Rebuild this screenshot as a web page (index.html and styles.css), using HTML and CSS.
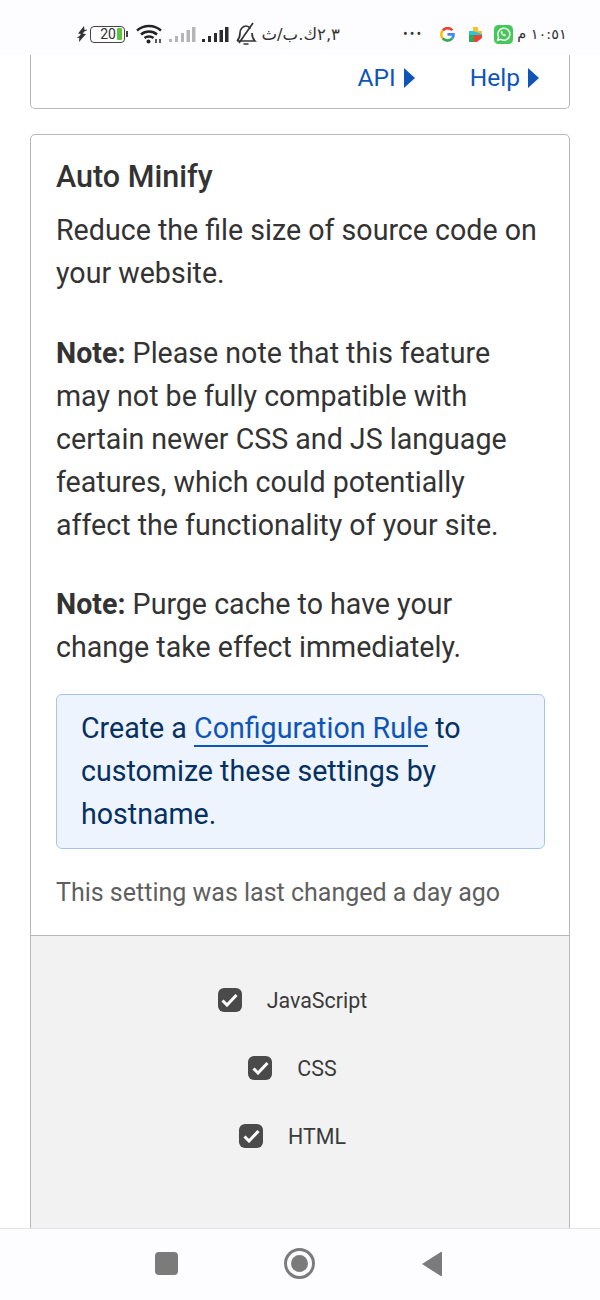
FILE: index.html
```html
<!DOCTYPE html>
<html lang="en">
<head>
    <meta charset="UTF-8">
    <meta name="viewport" content="width=device-width, initial-scale=1.0">
    <title>Auto Minify</title>
    <link rel="stylesheet" href="styles.css">
</head>
<body>
    <div class="phone">
        <div class="status-bar">
            <svg class="ic-bolt" width="10" height="16" viewBox="0 0 10 16"><path d="M7 0 1 7.500l3 .5-2 2.500-1 .2L0 12l2.300-.3L2 16l7-8-3.500-.5L8 5l1.500-.3L10 3.500 7.500 4z" fill="#333"/></svg>
            <div class="battery"><span class="battery-num">20</span><span class="battery-level"></span></div>
            <span class="battery-tip"></span>
            <svg class="ic-wifi" width="26" height="20" viewBox="0 0 26 20">
                <g fill="none" stroke="#222" stroke-width="2.400">
                    <path d="M1 6.500C8 .5 18 .5 25 6.500"/>
                    <path d="M5 10.500c4.500-4 11.500-4 16 0"/>
                    <path d="M8.500 14c2.500-2 6.500-2 9 0"/>
                </g>
                <circle cx="12.500" cy="17.500" r="2" fill="#222"/>
                <path d="M20 15v4M24 15v4" stroke="#222" stroke-width="1.500"/>
            </svg>
            <svg class="ic-signal" width="27" height="17" viewBox="0 0 27 17" fill="#b5b5b5"><rect x="0" y="13" width="3" height="3"/><rect x="6" y="10" width="3" height="6"/><rect x="12" y="7" width="3" height="9"/><rect x="17.500" y="4" width="3.500" height="12"/><rect x="23" y="1" width="3.500" height="15"/></svg>
            <svg class="ic-signal" width="27" height="17" viewBox="0 0 27 17" fill="#2b2b2b"><rect x="0" y="13" width="3" height="3"/><rect x="6" y="10" width="3" height="6"/><rect x="12" y="7" width="3" height="9"/><rect x="17.500" y="4" width="3.500" height="12"/><rect x="23" y="1" width="3.500" height="15"/></svg>
            <svg class="ic-bell" width="22" height="24" viewBox="0 0 22 24" fill="none" stroke="#333" stroke-width="1.700"><path d="M2 19c2-2 3-4.500 3-8C5 7 8 4 11 4c2 0 3.500 1 4.500 2.500M17 11c0 3 1 6 3 8H2M8.500 22h5"/><path d="M18 1 4 21"/></svg>
            <span class="net-speed" dir="rtl">٢,٣ك.ب/ث</span>
            <span class="status-dots">•••</span>
            <svg class="ic-g" width="15" height="15" viewBox="0 0 16 16" fill="none" stroke-width="2.800">
                <path d="M13.200 3.500A6.500 6.500 0 0 0 3 3.800" stroke="#ea4335"/>
                <path d="M3 3.800a6.500 6.500 0 0 0 0 8.400" stroke="#fbbc05"/>
                <path d="M3 12.200a6.500 6.500 0 0 0 10 0" stroke="#34a853"/>
                <path d="M13 12.200c1-1.200 1.500-2.600 1.400-4.300H8" stroke="#4285f4"/>
            </svg>
            <svg class="ic-games" width="13" height="15" viewBox="0 0 13 15">
                <path d="M4 0h5v4h4v4H0V4h4z" fill="#2bc4d8"/>
                <path d="M4 0h5v4h4v3L4 4z" fill="#fbc02d"/>
                <path d="M0 8h5v7H0z" fill="#34a853"/>
                <path d="M5 8h8v3l-5 4H5z" fill="#ea4335"/>
            </svg>
            <svg class="ic-whatsapp" width="19" height="19" viewBox="0 0 19 19">
                <rect width="19" height="19" rx="4.500" fill="#45c75a"/>
                <path d="M3.700 15.300 4.600 12a6 6 0 1 1 2.400 2.400z" fill="none" stroke="#fff" stroke-width="1.400"/>
                <path d="M7.200 6.200c-.8.800-.6 2 .5 3.300 1.200 1.400 2.600 2 3.600 1.500l.7-.9-1.500-1-.7.500c-.8-.3-1.300-1-1.600-1.700l.5-.7-.8-1.400z" fill="#fff"/>
            </svg>
            <span class="status-time" dir="rtl">١٠:٥١ م</span>
        </div>

        <div class="content">
            <div class="card card-top">
                <div class="card-links">
                    <a class="doc-link">API <span class="caret"></span></a>
                    <a class="doc-link">Help <span class="caret"></span></a>
                </div>
            </div>

            <div class="card">
                <div class="card-body">
                    <h2>Auto Minify</h2>
                    <p>Reduce the file size of source code on your website.</p>
                    <p><strong>Note:</strong> Please note that this feature may not be fully compatible with certain newer CSS and JS language features, which could potentially affect the functionality of your site.</p>
                    <p><strong>Note:</strong> Purge cache to have your change take effect immediately.</p>
                    <div class="notice">Create a <a class="notice-link">Configuration Rule</a> to customize these settings by hostname.</div>
                    <div class="last-changed">This setting was last changed a day ago</div>
                </div>
                <div class="card-control">
                    <label class="check"><span class="check-box"><svg width="17" height="14" viewBox="0 0 17 14"><path d="M1.500 7.500 6 12 15.500 2" fill="none" stroke="#fff" stroke-width="3"/></svg></span>JavaScript</label>
                    <label class="check"><span class="check-box"><svg width="17" height="14" viewBox="0 0 17 14"><path d="M1.500 7.500 6 12 15.500 2" fill="none" stroke="#fff" stroke-width="3"/></svg></span>CSS</label>
                    <label class="check"><span class="check-box"><svg width="17" height="14" viewBox="0 0 17 14"><path d="M1.500 7.500 6 12 15.500 2" fill="none" stroke="#fff" stroke-width="3"/></svg></span>HTML</label>
                </div>
            </div>
        </div>

        <div class="nav-bar">
            <span class="nav-square"></span>
            <span class="nav-circle"><span class="nav-dot"></span></span>
            <svg width="22" height="26" viewBox="0 0 22 26"><path d="M21 1.500V24.500a.8.8 0 0 1-1.200.6L1 13 19.800.9a.8.8 0 0 1 1.200.6z" fill="#7b7b7b"/></svg>
        </div>
    </div>
</body>
</html>
```

FILE: styles.css
```css
* {
    box-sizing: border-box;
}
body {
    margin: 0;
    background-color: #fff;
    font-family: Roboto, 'Noto Sans', sans-serif;
    color: #333;
}
.phone {
    width: 600px;
    height: 1300px;
    display: flex;
    flex-direction: column;
    overflow: hidden;
}

/* status bar */
.status-bar {
    height: 55px;
    flex-shrink: 0;
    background-color: #fdfcfe;
    display: flex;
    align-items: center;
    padding: 13px 0 0 77px;
    color: #333;
}
.ic-bolt {
    margin-right: 3px;
}
.battery {
    width: 35px;
    height: 17px;
    border: 1.500px solid #444;
    border-radius: 4px;
    display: flex;
    align-items: center;
    justify-content: flex-end;
    padding-right: 2px;
}
.battery-num {
    font-size: 14px;
    margin-right: 1px;
}
.battery-level {
    width: 5px;
    height: 12px;
    background-color: #5fc23c;
    border-radius: 1px;
}
.battery-tip {
    width: 2px;
    height: 6px;
    background-color: #444;
    margin: 0 8px 0 1px;
}
.ic-wifi {
    margin-right: 7px;
}
.ic-signal {
    margin-right: 6px;
}
.ic-bell {
    margin: 0 3px 0 0;
}
.net-speed {
    font-family: 'DejaVu Sans', sans-serif;
    font-size: 16.500px;
    width: 80px;
    white-space: nowrap;
}
.status-dots {
    font-size: 14px;
    letter-spacing: 2px;
    margin: 0 17px 0 63px;
}
.ic-g {
    margin-right: 14px;
}
.ic-games {
    margin-right: 12px;
}
.ic-whatsapp {
    margin-right: 4px;
}
.status-time {
    font-family: 'DejaVu Sans', sans-serif;
    font-size: 14.500px;
}

/* cards */
.content {
    flex: 1;
    min-height: 0;
    overflow: hidden;
    background-color: #fff;
    padding: 0 30px;
}
.card {
    border: 1px solid #b8b8b8;
    border-radius: 5px;
    background-color: #fff;
}
.card-top {
    height: 54px;
    border-top: none;
    border-radius: 0 0 5px 5px;
    margin-bottom: 25px;
}
.card-links {
    display: flex;
    justify-content: flex-end;
    gap: 55px;
    padding: 7px 30px 0 0;
}
.doc-link {
    font-size: 24.500px;
    line-height: 32px;
    color: #0f55b8;
}
.caret {
    display: inline-block;
    width: 0;
    height: 0;
    margin-left: 2px;
    border-left: 11px solid #0f55b8;
    border-top: 10px solid transparent;
    border-bottom: 10px solid transparent;
    vertical-align: -2px;
}
.card-body {
    padding: 21px 24px 24px 25px;
}
h2 {
    margin: 0 0 11px;
    font-size: 30.500px;
    line-height: 42px;
    font-weight: 500;
}
p {
    margin: 0 0 36.600px;
    font-size: 28.600px;
    line-height: 43px;
}
p:last-of-type {
    margin-bottom: 25px;
}
.notice {
    background-color: #edf4fd;
    border: 1px solid #a5c6e8;
    border-radius: 6px;
    padding: 12px 24px;
    font-size: 28.600px;
    line-height: 43px;
    color: #05305f;
    margin-bottom: 26px;
}
.notice-link {
    color: #0f55b8;
    border-bottom: 2px solid #0f55b8;
}
.last-changed {
    font-size: 25px;
    line-height: 36px;
    color: #5f5f5f;
}
.card-control {
    border-top: 1px solid #b8b8b8;
    background-color: #f2f2f2;
    height: 400px;
    padding: 47px 15px 0 0;
    display: flex;
    flex-direction: column;
    align-items: center;
    gap: 34px;
}
.check {
    display: flex;
    align-items: center;
    height: 34px;
    font-size: 21.400px;
    color: #3a3a3a;
}
.check-box {
    width: 24px;
    height: 24px;
    margin-right: 25px;
    border-radius: 6px;
    background-color: #4a4a4a;
    display: flex;
    align-items: center;
    justify-content: center;
}

/* nav bar */
.nav-bar {
    height: 72px;
    flex-shrink: 0;
    background-color: #fdfcfe;
    border-top: 1px solid #e3e3e3;
    display: flex;
    align-items: center;
    padding: 0 0 2px 155px;
}
.nav-square {
    width: 23px;
    height: 23px;
    border-radius: 4px;
    background-color: #7b7b7b;
    margin-right: 106px;
}
.nav-circle {
    width: 31px;
    height: 31px;
    border: 3px solid #7b7b7b;
    border-radius: 50%;
    display: flex;
    align-items: center;
    justify-content: center;
    margin-right: 106px;
}
.nav-dot {
    width: 17px;
    height: 17px;
    border-radius: 50%;
    background-color: #7b7b7b;
}
```
